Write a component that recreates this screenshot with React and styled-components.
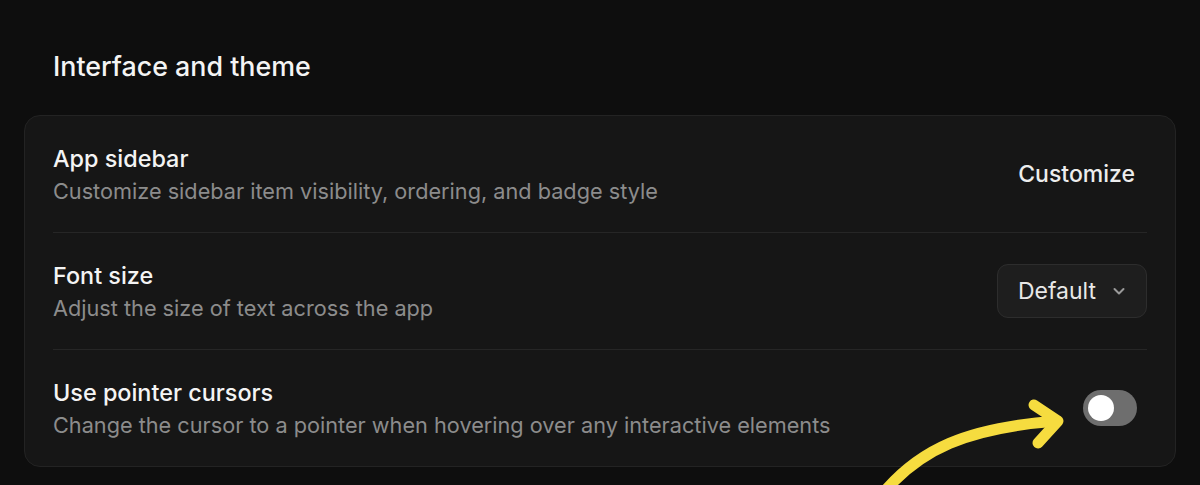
import React from "react";
import styled, { createGlobalStyle } from "styled-components";

const Global = createGlobalStyle`
  html, body { margin: 0; padding: 0; background: #0e0e0e; }
  body { font-family: Inter, "Noto Sans", sans-serif; color: #f2f2f2; -webkit-font-smoothing: antialiased; }
`;

const Page = styled.div`
  position: relative;
  width: 1200px;
  height: 485px;
  overflow: hidden;
  box-sizing: border-box;
  padding: 0 24px;
  background: #0e0e0e;
`;

const Heading = styled.h2`
  margin: 0;
  padding: 48px 0 0 29px;
  height: 115px;
  box-sizing: border-box;
  font-size: 26.8px;
  line-height: 36px;
  font-weight: 500;
  color: #f4f4f4;
`;

const Card = styled.div`
  background: #161616;
  border: 1px solid #232323;
  border-radius: 16px;
  padding: 0 28px;
`;

const Row = styled.div`
  display: flex;
  align-items: center;
  justify-content: space-between;
  height: 116px;
  border-top: ${(p) => (p.$first ? "none" : "1px solid #262626")};
`;

const Texts = styled.div`
  display: flex;
  flex-direction: column;
  gap: 2px;
`;

const Title = styled.div`
  font-size: 23.4px;
  line-height: 31px;
  font-weight: 500;
  color: #f4f4f4;
`;

const Desc = styled.div`
  font-size: 21.7px;
  line-height: 30px;
  color: #8c8c8c;
`;

const LinkButton = styled.button`
  background: none;
  border: none;
  padding: 0 12px 0 0;
  font-family: inherit;
  font-size: 23px;
  font-weight: 500;
  color: #ededed;
`;

const Select = styled.button`
  display: flex;
  align-items: center;
  gap: 15px;
  height: 54px;
  box-sizing: border-box;
  padding: 0 19px 0 20px;
  background: #1e1e1e;
  border: 1px solid #2d2d2d;
  border-radius: 11px;
  font-family: inherit;
  font-size: 23px;
  font-weight: 400;
  color: #e8e8e8;
`;

const Toggle = styled.div`
  width: 54px;
  height: 36px;
  margin-right: 10px;
  border-radius: 18px;
  background: #6e6e6e;
  display: flex;
  align-items: center;
  padding: 0 5px;
  box-sizing: border-box;
`;

const Knob = styled.div`
  width: 26px;
  height: 26px;
  border-radius: 50%;
  background: #ffffff;
`;

const ArrowOverlay = styled.svg`
  position: absolute;
  left: 0;
  top: 0;
  pointer-events: none;
`;

export default function App() {
  return (
    <Page>
      <Global />
      <Heading>Interface and theme</Heading>
      <Card>
        <Row $first>
          <Texts>
            <Title>App sidebar</Title>
            <Desc>Customize sidebar item visibility, ordering, and badge style</Desc>
          </Texts>
          <LinkButton>Customize</LinkButton>
        </Row>
        <Row>
          <Texts>
            <Title>Font size</Title>
            <Desc>Adjust the size of text across the app</Desc>
          </Texts>
          <Select>
            Default
            <svg width="16" height="16" viewBox="0 0 16 16" fill="none">
              <path d="M3.5 6l4.5 4.5 4.5-4.5" stroke="#9a9a9a" strokeWidth="2" strokeLinecap="round" strokeLinejoin="round" />
            </svg>
          </Select>
        </Row>
        <Row>
          <Texts>
            <Title>Use pointer cursors</Title>
            <Desc>Change the cursor to a pointer when hovering over any interactive elements</Desc>
          </Texts>
          <Toggle>
            <Knob />
          </Toggle>
        </Row>
      </Card>
      <ArrowOverlay width="1200" height="485" viewBox="0 0 1200 485">
        <path
          d="M884 492 C 920 450, 965 428, 1057 421"
          fill="none"
          stroke="#f6dc3f"
          strokeWidth="11"
          strokeLinecap="round"
        />
        <path
          d="M1034 405 L1058 421 L1038 443"
          fill="none"
          stroke="#f6dc3f"
          strokeWidth="11"
          strokeLinecap="round"
          strokeLinejoin="round"
        />
      </ArrowOverlay>
    </Page>
  );
}
